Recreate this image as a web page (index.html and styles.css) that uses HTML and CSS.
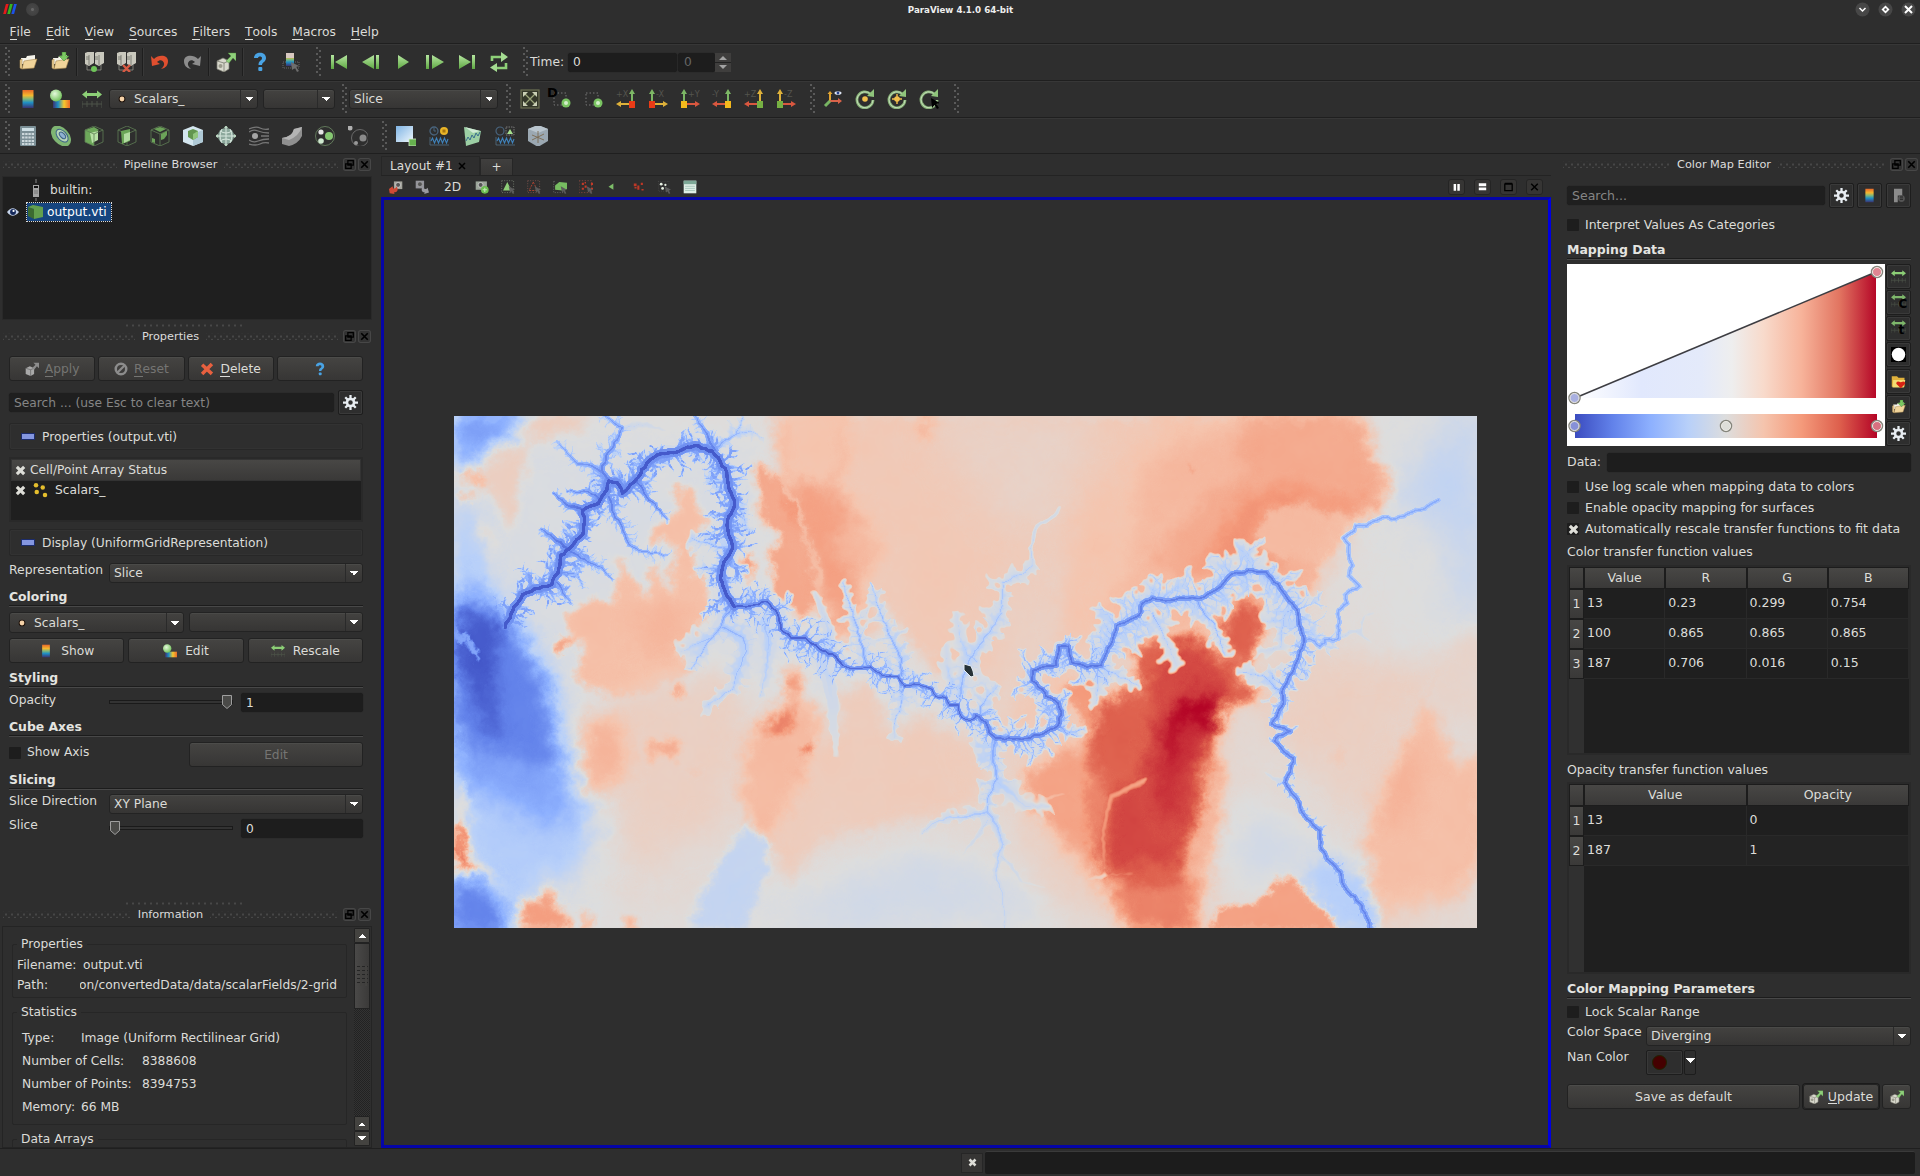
FILE: index.html
```html
<!DOCTYPE html>
<html lang="en">
<head>
<meta charset="utf-8">
<title>ParaView 4.1.0 64-bit</title>
<link rel="stylesheet" href="styles.css">
</head>
<body>
<svg class="defs" xmlns="http://www.w3.org/2000/svg">
<defs>
<linearGradient id="gRain" x1="0" y1="0" x2="0" y2="1"><stop offset="0" stop-color="#e8682a"/><stop offset=".3" stop-color="#f5b82e"/><stop offset=".5" stop-color="#7fb87a"/><stop offset=".7" stop-color="#1f8fc4"/><stop offset="1" stop-color="#3a3372"/></linearGradient>
<linearGradient id="gRainH" x1="1" y1="0" x2="0" y2="0"><stop offset="0" stop-color="#e8682a"/><stop offset=".35" stop-color="#f5c82e"/><stop offset=".7" stop-color="#1f8fc4"/><stop offset="1" stop-color="#3a3372"/></linearGradient>
<linearGradient id="gGreen" x1="0" y1="0" x2="0" y2="1"><stop offset="0" stop-color="#b5e6a0"/><stop offset="1" stop-color="#5fa843"/></linearGradient>
<linearGradient id="gSky" x1="0" y1="0" x2="1" y2="1"><stop offset="0" stop-color="#7fb4e4"/><stop offset="1" stop-color="#eef6fc"/></linearGradient>
<radialGradient id="gBall" cx=".4" cy=".35" r=".7"><stop offset="0" stop-color="#e4f8dc"/><stop offset="1" stop-color="#6cbf54"/></radialGradient>
<symbol id="open" viewBox="0 0 20 20"><path d="M3 6h5l1-2 8-1v9H3z" fill="#f5f3ea"/><path d="M2 8l2-1v10l-2-1zM4 17l2-8 13-2-3 9z" fill="#f0d49a" stroke="#a98950" stroke-width=".6"/></symbol>
<symbol id="opendown" viewBox="0 0 20 20"><use href="#open"/><path d="M12 0h4v4h3l-5 5-5-5h3z" fill="#7cc962" stroke="#3f7a2c" stroke-width=".5"/></symbol>
<symbol id="servers" viewBox="0 0 20 20"><path d="M1 1l5-2 4 1v11l-5 3-4-2zM11 1l4-2 5 1v11l-5 3-4-2z" fill="#c9c8bd"/><path d="M5 3v10M15 3v10M2 5h3M2 7h3M11 5h3M11 7h3" stroke="#6d6d66" stroke-width=".8"/><path d="M3 13v5h14v-5" fill="none" stroke="#92928a" stroke-width=".8"/></symbol>
<symbol id="connect" viewBox="0 0 20 20"><use href="#servers"/><circle cx="10" cy="17" r="3" fill="#6fc55a"/></symbol>
<symbol id="disconnect" viewBox="0 0 20 20"><use href="#servers"/><path d="M7 13l7 7M14 13l-7 7" stroke="#d85b44" stroke-width="2.4"/></symbol>
<symbol id="undo" viewBox="0 0 20 20"><path d="M1 4l1 10 8-2-3-2c3-3 6-2 7 1 .5 2-.5 4-3 6 5-1 7-4 7-8C18 3 9 2 4 7z" fill="#e04f2f"/></symbol>
<symbol id="redo" viewBox="0 0 20 20"><path d="M19 4l-1 10-8-2 3-2c-3-3-6-2-7 1-.5 2 .5 4 3 6-5-1-7-4-7-8C2 3 11 2 16 7z" fill="#8d8d8d"/></symbol>
<symbol id="cubearrow" viewBox="0 0 20 20"><path d="M1 9l6-3 6 3v8l-5 3-7-3z" fill="#d8d8cc" stroke="#7a7a70" stroke-width=".7"/><path d="M1 9l7 2v9M8 11l5-2" fill="none" stroke="#7a7a70" stroke-width=".8"/><circle cx="4.500" cy="14" r="2" fill="#9a9a8c"/><path d="M10 9l5-5-3-3h8v8l-3-3-4 5z" fill="#8fd07b" stroke="#4d8a3b" stroke-width=".4"/></symbol>
<symbol id="cubegrey" viewBox="0 0 20 20"><path d="M1 9l6-3 6 3v8l-5 3-7-3z" fill="#a9a9a9"/><path d="M1 9l7 2v9M8 11l5-2" fill="none" stroke="#666"/><path d="M10 9l5-5-3-3h8v8l-3-3-4 5z" fill="#8d8d8d"/></symbol>
<symbol id="help" viewBox="0 0 20 20"><path d="M4 6c0-7 12-7 12 0 0 4-4 4-4 7H8.500c0-5 3.500-4 3.500-7 0-2-4-2-4 0z" fill="#49a3e4"/><rect x="8.300" y="15" width="4" height="4" rx="1" fill="#49a3e4"/></symbol>
<symbol id="probe" viewBox="0 0 20 20"><path d="M1 10h16v6H1z" fill="none" stroke="#666" stroke-dasharray="1 1"/><rect x="4" y="1" width="8" height="13" fill="url(#gRain)"/><rect x="4" y="1" width="8" height="5" fill="#d8c8c0"/><path d="M9 10l8 4-3 1 3 4-2 1-2-4-3 2z" fill="#6d6d6d"/></symbol>
<symbol id="first" viewBox="0 0 20 20"><path d="M2 3h3v14H2zM18 3v14L6 10z" fill="url(#gGreen)"/></symbol>
<symbol id="last" viewBox="0 0 20 20"><path d="M18 3h-3v14h3zM2 3v14l12-7z" fill="url(#gGreen)"/></symbol>
<symbol id="back" viewBox="0 0 20 20"><path d="M18 3h-3v14h3zM13 3v14L1 10z" fill="url(#gGreen)"/></symbol>
<symbol id="fwd" viewBox="0 0 20 20"><path d="M1 3h3v14H1zM7 3v14l12-7z" fill="url(#gGreen)"/></symbol>
<symbol id="play" viewBox="0 0 20 20"><path d="M5 3v14l11-7z" fill="url(#gGreen)"/></symbol>
<symbol id="loop" viewBox="0 0 20 20"><path d="M3 9V5h10M17 11v5H7" fill="none" stroke="#8ed078" stroke-width="2.600"/><path d="M12 0l7 5-7 5zM8 11v9l-7-4.500z" fill="#a5dc92"/></symbol>
<symbol id="rainbow" viewBox="0 0 20 20"><rect x="4.500" y="1" width="11" height="18" fill="url(#gRain)"/></symbol>
<symbol id="ballmap" viewBox="0 0 20 20"><rect x="3" y="11" width="17" height="8" fill="url(#gRainH)"/><circle cx="6" cy="6.500" r="6" fill="url(#gBall)"/></symbol>
<symbol id="rescale" viewBox="0 0 20 20"><path d="M0 5.500l5-4V4h10V1.500l5 4-5 4V7H5v2.500z" fill="#8ccf76"/><path d="M0 12v7M20 12v7M5 12v6M10 12v6M15 12v6M0 15h20" stroke="#4c5348" stroke-width="1"/></symbol>
<symbol id="calc" viewBox="0 0 20 20"><rect x="2" y="0" width="16" height="20" rx="1" fill="#7b8f96"/><rect x="4" y="2" width="12" height="3" fill="#cfe0e6"/><path d="M4 8h12M4 11.500h12M4 15h12M4 18h12" stroke="#cdd8dc" stroke-width="2" stroke-dasharray="2.400 .8"/></symbol>
<symbol id="contour" viewBox="0 0 20 20"><ellipse cx="10" cy="10" rx="8" ry="12" fill="#7fb573" transform="rotate(-42 10 10)"/><ellipse cx="11" cy="10.500" rx="4.500" ry="7.500" fill="#b8d5b8" stroke="#3c6388" transform="rotate(-42 10 10)"/><ellipse cx="11.500" cy="10.500" rx="2.200" ry="4" fill="#8fb1d0" stroke="#3c6388" transform="rotate(-42 10 10)"/></symbol>
<symbol id="cube" viewBox="0 0 20 20"><path d="M10 0l9 4v12l-9 4-9-4V4zM1 4l9 4 9-4M10 8v12" fill="none" stroke="#5f7d55" stroke-width=".8"/></symbol>
<symbol id="clip" viewBox="0 0 20 20"><path d="M1 4l9-3 5 3-5 3v13l-9-4z" fill="#6da85a"/><path d="M6 7l8-2v9l-6 3z" fill="#b8e2a6"/><use href="#cube"/></symbol>
<symbol id="slice" viewBox="0 0 20 20"><use href="#cube"/><path d="M4 5l9-2v12l-8 3z" fill="#6aa557"/><path d="M7 8l6-2v8l-6 3z" fill="#b1dba0"/></symbol>
<symbol id="thresh" viewBox="0 0 20 20"><use href="#cube"/><path d="M4 3l6-2 6 2-6 3zM11 8l6-3v4l-3 4-3 1zM2 12l3 1v4l-3-1z" fill="#6ca359"/></symbol>
<symbol id="subset" viewBox="0 0 20 20"><path d="M10 0l10 4v12l-10 4-10-4V4z" fill="#d4e6ef"/><path d="M10 8v12l10-4V4z" fill="#afc9d6"/><path d="M10 3l5 2v6l-5 3-5-3V5z" fill="#63964f"/><path d="M10 8v6l5-3V5z" fill="#93c67e"/></symbol>
<symbol id="glyph" viewBox="0 0 20 20"><circle cx="10" cy="10" r="8" fill="#8ca89c"/><path d="M2 10h16M10 2v16M4 5q6 4 12 0M4 15q6-4 12 0M6 3q-4 7 0 14M14 3q4 7 0 14" fill="none" stroke="#d8e8df" stroke-width="1"/><path d="M10-1l2 3H8zM10 21l2-3H8zM-1 10l3-2v4zM21 10l-3-2v4z" fill="#bdd9c4"/></symbol>
<symbol id="stream" viewBox="0 0 20 20"><circle cx="6" cy="10" r="3" fill="#a5a5a5"/><path d="M0 3q7-3 11-1t9 1M0 6q4-3 9-1t11 2M12 10h8M0 14q4 3 9 1t11-2M0 18q7 2 11 0t9-1" fill="none" stroke="#777" stroke-width="1.300"/></symbol>
<symbol id="warp" viewBox="0 0 20 20"><path d="M0 12q10-1 12-9l8-2v9q-4 8-13 10l-7-2z" fill="#8f8f8f"/><path d="M0 12q10-1 12-9l8-2q-3 9-13 13z" fill="#b4b4b4"/></symbol>
<symbol id="group" viewBox="0 0 20 20"><circle cx="10" cy="10" r="9.500" fill="none" stroke="#6f8c66" stroke-width=".8"/><circle cx="6" cy="6" r="2.600" fill="#e4e4e4"/><circle cx="14" cy="10" r="4" fill="#86c872"/><circle cx="6" cy="15" r="2.800" fill="#cfe8cf"/></symbol>
<symbol id="extract" viewBox="0 0 20 20"><circle cx="12" cy="12" r="8.500" fill="none" stroke="#777" stroke-width=".8"/><circle cx="2" cy="2" r="2.500" fill="#b0b0b0"/><circle cx="15" cy="12" r="3.500" fill="#8a8a8a"/><circle cx="8" cy="17" r="2" fill="#999"/></symbol>
<symbol id="selblock" viewBox="0 0 20 20"><rect width="17" height="16" fill="url(#gSky)"/><rect x="13" y="13" width="8" height="7" fill="#66b04e" stroke="#d5ecd0" stroke-width=".8"/></symbol>
<symbol id="plot" viewBox="0 0 20 20"><path d="M1 11v8h19" stroke="#57758d" fill="none" stroke-width=".7"/><path d="M2 15l1.500-3 2 5 2-5 2 5 2-5 2 5 2-5 2 5 1.500-4" fill="none" stroke="#3f83bc" stroke-width="1.100"/></symbol>
<symbol id="clockplot" viewBox="0 0 20 20"><circle cx="5" cy="5" r="4" fill="none" stroke="#49647d" stroke-width="1.300"/><path d="M5 2v3h2" stroke="#49647d" fill="none"/><circle cx="15" cy="5" r="4" fill="#e9b528"/><rect x="13.500" y="3.500" width="3" height="3" fill="#a8760d"/><use href="#plot"/></symbol>
<symbol id="lineplot" viewBox="0 0 20 20"><path d="M2 1l17 4-2 11-13 4z" fill="#9ccfa4"/><path d="M3 1l15 4-7 2z" fill="#d0ebd6"/><path d="M4 15l2-4 2 3 2-5 2 3 2-5 2 3 2-4" fill="none" stroke="#396d8e"/></symbol>
<symbol id="selplot" viewBox="0 0 20 20"><circle cx="5" cy="5" r="4" fill="none" stroke="#49647d" stroke-width="1.200"/><rect x="11" y="1" width="8" height="8" fill="none" stroke="#777" stroke-dasharray="1.500 1"/><path d="M15 3l3 5h-6z" fill="#a5df8e"/><use href="#plot"/></symbol>
<symbol id="macro" viewBox="0 0 20 20"><path d="M10-1l10 4v12l-10 6L0 15V3z" fill="#9ba8b2"/><path d="M10-1L0 3l10 4 10-4z" fill="#b9c5ce"/><path d="M10 5v12M4 9l12 5M16 8L4 14" stroke="#7c6a50" stroke-width=".9"/></symbol>
<symbol id="fit" viewBox="0 0 20 20"><rect x="1" y="1" width="18" height="18" fill="#34382a" stroke="#6d7154" stroke-width="1.200"/><path d="M4 4l12 12M16 4L4 16" stroke="#9aa57a" stroke-width="1.300"/><path d="M3 3h5L3 8zM17 3h-5l5 5zM3 17h5l-5-5zM17 17h-5l5-5z" fill="#c9cfb5"/></symbol>
<symbol id="zoombox" viewBox="0 0 20 20"><rect x="2" y="4" width="12" height="12" fill="none" stroke="#777" stroke-width="1" stroke-dasharray="1.500 2"/><circle cx="14" cy="14" r="4.500" fill="#7ac562"/><circle cx="14" cy="14" r="2" fill="#d2efc9"/></symbol>
<symbol id="orient" viewBox="0 0 20 20"><path d="M6 13V5H4.500L7 2l2.500 3H8v8z" fill="#e2a430"/><path d="M7 11h8V9l4 3-4 3v-2H7z" fill="#d9634a"/><path d="M7 12l-5 5" stroke="#78b563" stroke-width="3"/><ellipse cx="15" cy="4" rx="3.500" ry="1.800" fill="#dfe6f5"/><circle cx="15" cy="4" r="1.400" fill="#25408b"/></symbol>
<symbol id="rot" viewBox="0 0 20 20"><path d="M15.500 5A8 8 0 1 0 18 11" fill="none" stroke="#86b176" stroke-width="2.800"/><path d="M15.500 5A8 8 0 1 0 18 11" fill="none" stroke="#c5dfba" stroke-width="1"/><path d="M12 7l7 1V0z" fill="#8fc47b"/></symbol>
<symbol id="rotdot" viewBox="0 0 20 20"><use href="#rot"/><circle cx="10" cy="10" r="2.800" fill="#f2c04c"/></symbol>
<symbol id="rotcross" viewBox="0 0 20 20"><use href="#rotdot"/><path d="M10 5v10M5 10h10" stroke="#f2c04c" stroke-width="1.400"/></symbol>
<symbol id="rotpick" viewBox="0 0 20 20"><use href="#rot"/><path d="M12 9l9 5-3.500 1 2.500 4-2 1-2.500-4-2.500 3z" fill="#000"/></symbol>
<symbol id="gear" viewBox="0 0 20 20"><g fill="none" stroke="#e8edf2"><circle cx="10" cy="10" r="4.700" stroke-width="3.400"/><path d="M10 0v5M10 15v5M0 10h5M15 10h5M3 3l3.500 3.500M13.500 13.500L17 17M17 3l-3.500 3.500M6.500 13.500L3 17" stroke-width="3"/></g></symbol>
<symbol id="floaticon" viewBox="0 0 12 12"><rect x=".5" y=".5" width="11" height="11" rx="2" fill="#333" stroke="#474747"/><path d="M4.500 2.500h5v4h-5zM2.500 5.500h5v4h-5z" fill="#333" stroke="#000" stroke-width="1.200"/></symbol>
<symbol id="closeicon" viewBox="0 0 12 12"><rect x=".5" y=".5" width="11" height="11" rx="2" fill="#333" stroke="#474747"/><path d="M3 3l6 6M9 3L3 9" stroke="#000" stroke-width="1.500"/></symbol>
<symbol id="reset" viewBox="0 0 20 20"><circle cx="10" cy="10" r="7.500" fill="none" stroke="#8c8c8c" stroke-width="3.600"/><path d="M5 15L15 5" stroke="#8c8c8c" stroke-width="3.200"/></symbol>
<symbol id="delete" viewBox="0 0 20 20"><path d="M3 4l14 13M17 3L3 17" stroke="#e8603f" stroke-width="5"/></symbol>
<symbol id="check" viewBox="0 0 12 12"><path d="M2 2l8 8M10 2l-8 8" stroke="#deded8" stroke-width="3.400"/></symbol>
<symbol id="point" viewBox="0 0 20 20"><circle cx="10" cy="10" r="4.200" fill="#1d1008"/><circle cx="10" cy="10" r="3" fill="#f6d3a9"/></symbol>
<symbol id="points" viewBox="0 0 20 20"><g fill="#e5be2d"><circle cx="4" cy="3" r="3"/><circle cx="13" cy="6" r="3"/><circle cx="5" cy="12" r="3"/><circle cx="16" cy="16" r="3"/></g></symbol>
<symbol id="camundo" viewBox="0 0 20 20"><path d="M7 2h12v11H7z" fill="#a4a49c"/><circle cx="13" cy="7" r="3.500" fill="#555" stroke="#ddd"/><path d="M0 13l5-4 1 3q4 1 5-3 4 8-4 9l1 2-7-1z" fill="#cf4a36"/></symbol>
<symbol id="camredo" viewBox="0 0 20 20"><path d="M1 1h12v11H1z" fill="#93939a"/><circle cx="7" cy="6" r="3.500" fill="#555" stroke="#aaa"/><path d="M20 18l-2-7-2 2q-4 0-5-4-4 8 3 9l-1 2z" fill="#9a9aa0"/></symbol>
<symbol id="camzoom" viewBox="0 0 20 20"><path d="M1 2h16v12H1z" fill="#9ca69a"/><circle cx="8" cy="7" r="3.500" fill="#555" stroke="#ddd"/><circle cx="14" cy="14" r="5.500" fill="#6dbf51"/><path d="M14 11v6M11 14h6" stroke="#c4eab8" stroke-width="1.500"/></symbol>
<symbol id="selarrow" viewBox="0 0 20 20"><path d="M11 9l9 5-3 1 2 4-2 1-2-4-2 2z" fill="#5b5b5b"/></symbol>
<symbol id="selcell" viewBox="0 0 20 20"><rect x="1" y="1" width="17" height="17" fill="none" stroke="#7f8a7a" stroke-dasharray="1.500 2"/><path d="M9 3l6 12H3z" fill="#8fd078"/><use href="#selarrow"/></symbol>
<symbol id="selpoint" viewBox="0 0 20 20"><rect x="1" y="1" width="17" height="17" fill="none" stroke="#8a5a50" stroke-dasharray="1.500 2"/><path d="M9 3l6 12H3z" fill="none" stroke="#b34331" stroke-width="1.300" stroke-dasharray="3 1.500"/><use href="#selarrow"/></symbol>
<symbol id="frust" viewBox="0 0 20 20"><path d="M1 2h3M1 2v16h14" fill="none" stroke="#777" stroke-dasharray="1.500 2"/><path d="M3 8l6-5 11 1v9l-6 2-11-1z" fill="#77bd61"/><use href="#selarrow"/></symbol>
<symbol id="frustp" viewBox="0 0 20 20"><path d="M0 1h18v17H0z" fill="none" stroke="#8f4a40" stroke-dasharray="2 2"/><g fill="#c33a28"><path d="M4 4h3v3H4zM8 8h3v3H8zM4 11h3v3H4zM17 4h3v3h-3zM17 11h3v3h-3zM8 3h2v2H8z"/></g><use href="#selarrow"/></symbol>
<symbol id="poly" viewBox="0 0 20 20"><path d="M12 5v9l-7-4.500z" fill="#7dbd69"/></symbol>
<symbol id="blocks" viewBox="0 0 20 20"><path d="M4 5h4v4H4zM9 8h3v6H9zM5 10h3v2H5zM14 4h3v3h-3zM15 13h3v2h-3z" fill="#bd3827"/></symbol>
<symbol id="interact" viewBox="0 0 20 20"><rect x="2" y="2" width="15" height="14" fill="none" stroke="#555" stroke-dasharray="1 2"/><g fill="#e6efe2"><circle cx="6" cy="6" r="2"/><circle cx="12" cy="7" r="1.600"/><circle cx="8" cy="12" r="2"/></g><use href="#selarrow"/></symbol>
<symbol id="sheet" viewBox="0 0 20 20"><rect x="1" y="1" width="18" height="18" fill="#dfeee6"/><rect x="1" y="1" width="18" height="5" fill="#7da897"/><path d="M3 9h14M3 12h14M3 15h14" stroke="#98bbb0"/></symbol>
</defs>
</svg>

<header class="titlebar">
  <svg class="logo" viewBox="0 0 15 11"><path d="M3 0h3L3 11H0z" fill="#e51a1a"/><path d="M7.500 0h3l-3 11h-3z" fill="#35b521"/><path d="M12 0h3l-3 11H9z" fill="#1d52e8"/></svg>
  <span class="orb"></span>
  <span class="wtitle">ParaView 4.1.0 64-bit</span>
  <span class="wbtns">
    <svg viewBox="0 0 15 15"><circle cx="7.500" cy="7.500" r="7" fill="#474747"/><path d="M4.500 6l3 3 3-3" fill="none" stroke="#fff" stroke-width="1.500"/></svg>
    <svg viewBox="0 0 15 15"><circle cx="7.500" cy="7.500" r="7" fill="#474747"/><path d="M7.500 3.500l4 4-4 4-4-4z" fill="#fff"/><circle cx="7.500" cy="7.500" r="1.200" fill="#444"/></svg>
    <svg viewBox="0 0 15 15"><circle cx="7.500" cy="7.500" r="7" fill="#474747"/><path d="M4 4l7 7M11 4l-7 7" stroke="#fff" stroke-width="2"/></svg>
  </span>
</header>
<nav class="menu"><span><u>F</u>ile</span><span><u>E</u>dit</span><span><u>V</u>iew</span><span><u>S</u>ources</span><span><u>F</u>ilters</span><span><u>T</u>ools</span><span><u>M</u>acros</span><span><u>H</u>elp</span></nav>

<div class="toolbar">
  <i class="grip"></i>
  <svg class="t"><use href="#open"/></svg><svg class="t"><use href="#opendown"/></svg><i class="sep"></i>
  <svg class="t"><use href="#connect"/></svg><svg class="t"><use href="#disconnect"/></svg><i class="sep"></i>
  <svg class="t"><use href="#undo"/></svg><svg class="t"><use href="#redo"/></svg><i class="sep"></i>
  <svg class="t"><use href="#cubearrow"/></svg><i class="sep"></i>
  <svg class="t"><use href="#help"/></svg><svg class="t"><use href="#probe"/></svg>
  <i class="grip wide g1"></i>
  <svg class="t"><use href="#first"/></svg><svg class="t"><use href="#back"/></svg><svg class="t"><use href="#play"/></svg><svg class="t"><use href="#fwd"/></svg><svg class="t"><use href="#last"/></svg><svg class="t"><use href="#loop"/></svg>
  <i class="grip wide"></i>
  <span class="time">Time:</span><span class="field f-time">0</span><span class="field f-idx">0</span><span class="spin"><svg viewBox="0 0 16 19"><path d="M8 3l4 4H4zM8 16l4-4H4z" fill="#a3a3a3"/><path d="M0 9.500h16" stroke="#222"/></svg></span>
</div>
<div class="toolbar">
  <i class="grip"></i>
  <svg class="t"><use href="#rainbow"/></svg><svg class="t"><use href="#ballmap"/></svg><svg class="t"><use href="#rescale"/></svg>
  <span class="combo c-arr"><svg class="i16"><use href="#point"/></svg><em>Scalars_</em></span><span class="combo c-comp"></span>
  <i class="grip g2"></i><span class="combo c-rep"><em>Slice</em></span><i class="grip g3"></i>
  <svg class="t"><use href="#fit"/></svg>
  <span class="t dd"><svg><use href="#zoombox"/></svg><b>D</b></span>
  <svg class="t"><use href="#zoombox"/></svg>
  <svg class="t" viewBox="0 0 20 20"><text x="0" y="8" class="ax">+X</text><path d="M15 13V5h-2l3-5 3 5h-2v8z" fill="#7cb765"/><path d="M13 14H5v-2l-5 3 5 3v-2h8z" fill="#deb13a"/><rect x="13" y="12" width="6" height="7" fill="#ea3b16"/></svg>
  <svg class="t" viewBox="0 0 20 20"><text x="8" y="8" class="ax">-X</text><path d="M3 13V5H1l3-5 3 5H5v8z" fill="#7cb765"/><path d="M7 14h8v-2l5 3-5 3v-2H7z" fill="#deb13a"/><rect x="1" y="12" width="6" height="7" fill="#ea3b16"/></svg>
  <svg class="t" viewBox="0 0 20 20"><text x="8" y="8" class="ax">+Y</text><path d="M3 13V5H1l3-5 3 5H5v8z" fill="#7cb765"/><path d="M7 14h8v-2l5 3-5 3v-2H7z" fill="#d9573f"/><rect x="1" y="12" width="6" height="7" fill="#f3b81c"/></svg>
  <svg class="t" viewBox="0 0 20 20"><text x="0" y="8" class="ax">-Y</text><path d="M15 13V5h-2l3-5 3 5h-2v8z" fill="#7cb765"/><path d="M13 14H5v-2l-5 3 5 3v-2h8z" fill="#d9573f"/><rect x="13" y="12" width="6" height="7" fill="#f3b81c"/></svg>
  <svg class="t" viewBox="0 0 20 20"><text x="0" y="8" class="ax">+Z</text><path d="M15 13V5h-2l3-5 3 5h-2v8z" fill="#deb13a"/><path d="M13 14H5v-2l-5 3 5 3v-2h8z" fill="#d9573f"/><rect x="13" y="12" width="6" height="7" fill="#76b043"/></svg>
  <svg class="t" viewBox="0 0 20 20"><text x="8" y="8" class="ax">-Z</text><path d="M3 13V5H1l3-5 3 5H5v8z" fill="#deb13a"/><path d="M7 14h8v-2l5 3-5 3v-2H7z" fill="#d9573f"/><rect x="1" y="12" width="6" height="7" fill="#76b043"/></svg>
  <i class="grip wide g4"></i>
  <svg class="t"><use href="#orient"/></svg><svg class="t"><use href="#rotdot"/></svg><svg class="t"><use href="#rotcross"/></svg><svg class="t"><use href="#rotpick"/></svg>
  <i class="grip wide g5"></i>
</div>
<div class="toolbar filters">
  <i class="grip"></i>
  <svg class="t"><use href="#calc"/></svg><svg class="t"><use href="#contour"/></svg><svg class="t"><use href="#clip"/></svg><svg class="t"><use href="#slice"/></svg><svg class="t"><use href="#thresh"/></svg><svg class="t"><use href="#subset"/></svg><svg class="t"><use href="#glyph"/></svg><svg class="t"><use href="#stream"/></svg><svg class="t"><use href="#warp"/></svg><svg class="t"><use href="#group"/></svg><svg class="t"><use href="#extract"/></svg>
  <i class="grip wide"></i>
  <svg class="t"><use href="#selblock"/></svg><svg class="t"><use href="#clockplot"/></svg><svg class="t"><use href="#lineplot"/></svg><svg class="t"><use href="#selplot"/></svg><svg class="t"><use href="#macro"/></svg>
</div>

<div class="main">
<aside class="left">
  <div class="dock-title"><i></i><span>Pipeline Browser</span><i></i><svg><use href="#floaticon"/></svg><svg><use href="#closeicon"/></svg></div>
  <div class="tree">
    <div class="tnode"><span class="eye"></span><svg class="srv" viewBox="0 0 8 22"><path d="M4 0v4M4 19v3" stroke="#888"/><rect x="1" y="6" width="6" height="12" fill="#a5a5a5"/><rect x="2" y="7" width="4" height="2" fill="#111"/><path d="M2 12h4M2 14h4" stroke="#777"/></svg><span>builtin:</span></div>
    <div class="tnode"><span class="eye"><svg viewBox="0 0 11 8"><path d="M0 4q5-7 11 0-6 7-11 0z" fill="#c5d3ea"/><circle cx="5.500" cy="4" r="2.700" fill="#14285a"/><circle cx="6" cy="3" r="1" fill="#fff"/></svg></span><span class="sel"><svg viewBox="0 0 15 14"><path d="M0 2l6 2v10l-6-3z" fill="#3c6b31"/><path d="M0 2l5-2 10 2v10L6 14V4z" fill="#63a04e"/></svg>output.vti</span></div>
  </div>
  <div class="split"></div>
  <div class="dock-title"><i></i><span>Properties</span><i></i><svg><use href="#floaticon"/></svg><svg><use href="#closeicon"/></svg></div>
  <div class="props">
    <div class="r r-btns"><span class="btn off"><svg class="i14"><use href="#cubegrey"/></svg><em><u>A</u>pply</em></span><span class="btn off"><svg class="i14"><use href="#reset"/></svg><em><u>R</u>eset</em></span><span class="btn"><svg class="i14"><use href="#delete"/></svg><em><u>D</u>elete</em></span><span class="btn"><svg class="i14"><use href="#help"/></svg></span></div>
    <div class="r r-search"><span class="field ph">Search ... (use Esc to clear text)</span><span class="gearbtn"><svg><use href="#gear"/></svg></span></div>
    <div class="group g-a"><i class="minus"></i>Properties (output.vti)</div>
    <div class="arrays"><div class="ahead"><svg class="ck"><use href="#check"/></svg>Cell/Point Array Status</div><div class="arow"><svg class="ck"><use href="#check"/></svg><svg class="pts"><use href="#points"/></svg>Scalars_</div></div>
    <div class="group g-b"><i class="minus"></i>Display (UniformGridRepresentation)</div>
    <div class="r r-rep"><label>Representation</label><span class="combo"><em>Slice</em></span></div>
    <h4 class="h-col">Coloring</h4>
    <div class="r r-col"><span class="combo"><svg class="i16"><use href="#point"/></svg><em>Scalars_</em></span><span class="combo"></span></div>
    <div class="r r-show"><span class="btn"><svg class="i14"><use href="#rainbow"/></svg><em>Show</em></span><span class="btn"><svg class="i14"><use href="#ballmap"/></svg><em>Edit</em></span><span class="btn"><svg class="i14"><use href="#rescale"/></svg><em>Rescale</em></span></div>
    <h4 class="h-sty">Styling</h4>
    <div class="r r-op"><label>Opacity</label><span class="slider end"><svg viewBox="0 0 10 14"><path d="M.5.5h9v9L5 13.500.5 9.500z" fill="#4a4a48" stroke="#aaa" stroke-width=".9"/></svg></span><span class="field">1</span></div>
    <h4 class="h-cube">Cube Axes</h4>
    <div class="r r-cube"><span class="box"></span><label>Show Axis</label><span class="btn off">Edit</span></div>
    <h4 class="h-sli">Slicing</h4>
    <div class="r r-dir"><label>Slice Direction</label><span class="combo"><em>XY Plane</em></span></div>
    <div class="r r-sl"><label>Slice</label><span class="slider"><svg viewBox="0 0 10 14"><path d="M.5.5h9v9L5 13.500.5 9.500z" fill="#4a4a48" stroke="#aaa" stroke-width=".9"/></svg></span><span class="field">0</span></div>
  </div>
  <div class="split"></div>
  <div class="dock-title"><i></i><span>Information</span><i></i><svg><use href="#floaticon"/></svg><svg><use href="#closeicon"/></svg></div>
  <div class="info">
    <div class="icol">
      <fieldset class="fs1"><legend>Properties</legend><p><b>Filename:</b>output.vti</p><p><b>Path:</b><span class="path"><bdi>selection/convertedData/data/scalarFields/2-grid</bdi></span></p></fieldset>
      <fieldset class="fs2"><legend>Statistics</legend><p><b>Type:</b>Image (Uniform Rectilinear Grid)</p><p><b class="w">Number of Cells:</b>8388608</p><p><b class="w">Number of Points:</b>8394753</p><p><b>Memory:</b>66 MB</p></fieldset>
      <fieldset class="fs3"><legend>Data Arrays</legend></fieldset>
    </div>
    <div class="scroll"><span class="sb up"></span><span class="thumb"></span><span class="track"></span><span class="sb up"></span><span class="sb down"></span></div>
  </div>
</aside>

<section class="center">
  <div class="tabs"><span class="tab">Layout #1<svg viewBox="0 0 8 8"><path d="M1 1l6 6M7 1L1 7" stroke="#000" stroke-width="1.500"/></svg></span><span class="tab plus">+</span></div>
  <div class="viewbar">
    <svg><use href="#camundo"/></svg><svg><use href="#camredo"/></svg><span>2D</span><svg><use href="#camzoom"/></svg><svg><use href="#selcell"/></svg><svg><use href="#selpoint"/></svg><svg><use href="#frust"/></svg><svg><use href="#frustp"/></svg><svg><use href="#poly"/></svg><svg><use href="#blocks"/></svg><svg><use href="#interact"/></svg><svg><use href="#sheet"/></svg>
    <span class="vbtns">
      <svg viewBox="0 0 17 17"><path d="M5 5h3v8H5zM9.500 5h3v8h-3z" fill="#fff"/></svg><svg viewBox="0 0 17 17"><path d="M4 4h9v3.500H4zM4 9h9v3.500H4z" fill="#fff"/></svg><svg viewBox="0 0 17 17"><path d="M4 5h9v8H4zM4 4h9" fill="none" stroke="#000" stroke-width="1.600"/></svg><svg viewBox="0 0 17 17"><path d="M4.500 4.500l8 8M12.500 4.500l-8 8" stroke="#000" stroke-width="1.800"/></svg>
    </span>
  </div>
  <div class="view"><div class="mapwrap"><canvas id="map" width="1023" height="512"></canvas><svg class="cursor" viewBox="0 0 12 15"><path d="M1 1l7 2 2 5 1 5-3 1L5 11 1 7z" fill="#263238" stroke="#e8eef4" stroke-width="1"/></svg></div></div>
</section>

<aside class="right">
  <div class="dock-title"><i></i><span>Color Map Editor</span><i></i><svg><use href="#floaticon"/></svg><svg><use href="#closeicon"/></svg></div>
  <div class="cme">
    <div class="r c-search"><span class="field ph">Search...</span><span class="gearbtn"><svg><use href="#gear"/></svg></span><span class="gearbtn"><svg><use href="#rainbow"/></svg></span><span class="gearbtn"><svg viewBox="0 0 20 20"><path d="M4 1h11v9H9v9H4z" fill="#8b8b8b"/><circle cx="14" cy="14" r="4.500" fill="#555"/><path d="M12 12h4M12 15h4" stroke="#222" stroke-width="1.500"/></svg></span></div>
    <div class="r chk k1"><span class="box"></span>Interpret Values As Categories</div>
    <h4 class="h-map">Mapping Data</h4>
    <div class="mapping">
      <svg class="chart" viewBox="0 0 318 182">
        <defs><linearGradient id="cw" gradientUnits="userSpaceOnUse" x1="8" y1="0" x2="310" y2="0"><stop offset="0" stop-color="#3b4cc0"/><stop offset=".125" stop-color="#6282ea"/><stop offset=".25" stop-color="#8db0fe"/><stop offset=".375" stop-color="#b8d0f9"/><stop offset=".5" stop-color="#ddd"/><stop offset=".625" stop-color="#f5c4ad"/><stop offset=".75" stop-color="#f49a7b"/><stop offset=".875" stop-color="#de604d"/><stop offset="1" stop-color="#b40426"/></linearGradient>
        <linearGradient id="cwo" gradientUnits="userSpaceOnUse" x1="8" y1="0" x2="310" y2="0"><stop offset="0" stop-color="#fff"/><stop offset=".22" stop-color="#e1e8fd"/><stop offset=".42" stop-color="#e4eafa"/><stop offset=".52" stop-color="#eee"/><stop offset=".625" stop-color="#f8dacb"/><stop offset=".75" stop-color="#f7b39a"/><stop offset=".875" stop-color="#e27561"/><stop offset="1" stop-color="#b40426"/></linearGradient></defs>
        <rect width="318" height="182" fill="#fff"/><path d="M8 134L309 8v126z" fill="url(#cwo)"/><path d="M8 134L309 8" stroke="#3d3d42" stroke-width="1.500"/><rect x="8" y="150" width="302" height="24" fill="url(#cw)"/>
        <g stroke="#85857c" stroke-width="1.500"><circle cx="7.500" cy="134" r="5.500" fill="#a9b0e0"/><circle cx="310" cy="8" r="5.500" fill="#e08592"/><circle cx="7.500" cy="162" r="5.500" fill="#8791d8"/><circle cx="159" cy="162" r="5.500" fill="#deded9"/><circle cx="310" cy="162" r="5.500" fill="#d8707f"/></g>
        <g fill="none" stroke="#eceae4" stroke-width="1"><circle cx="7.500" cy="134" r="4.500"/><circle cx="310" cy="8" r="4.500"/><circle cx="7.500" cy="162" r="4.500"/><circle cx="159" cy="162" r="4.500"/><circle cx="310" cy="162" r="4.500"/></g>
      </svg>
      <div class="side"><span class="gearbtn"><svg><use href="#rescale"/></svg></span><span class="gearbtn rc"><svg><use href="#rescale"/></svg><b>C</b></span><span class="gearbtn rc"><svg><use href="#rescale"/></svg><b>t</b></span><span class="gearbtn"><svg viewBox="0 0 20 20"><rect width="20" height="20" fill="#000"/><circle cx="10" cy="10" r="9" fill="#fff"/></svg></span><span class="gearbtn"><svg viewBox="0 0 20 20"><path d="M1 3h7l2 2h8v12H1z" fill="#e0b13c"/><path d="M3 8h16l-2 10H2z" fill="#f4dd72"/><path d="M13 19l-6-6q0-5 6-2 6-3 6 2z" fill="#d62314"/></svg></span><span class="gearbtn"><svg><use href="#opendown"/></svg></span><span class="gearbtn"><svg><use href="#gear"/></svg></span></div>
    </div>
    <div class="r c-data"><label>Data:</label><span class="field"></span></div>
    <div class="r chk k2"><span class="box"></span>Use log scale when mapping data to colors</div>
    <div class="r chk k3"><span class="box"></span>Enable opacity mapping for surfaces</div>
    <div class="r chk k3"><span class="box"><svg class="ck"><use href="#check"/></svg></span>Automatically rescale transfer functions to fit data</div>
    <div class="cap">Color transfer function values</div>
    <div class="table t4">
      <div class="tr th"><span></span><span>Value</span><span>R</span><span>G</span><span>B</span></div>
      <div class="tr"><span>1</span><span>13</span><span>0.23</span><span>0.299</span><span>0.754</span></div>
      <div class="tr alt"><span>2</span><span>100</span><span>0.865</span><span>0.865</span><span>0.865</span></div>
      <div class="tr"><span>3</span><span>187</span><span>0.706</span><span>0.016</span><span>0.15</span></div>
    </div>
    <div class="cap cap2">Opacity transfer function values</div>
    <div class="table t2">
      <div class="tr th"><span></span><span>Value</span><span>Opacity</span></div>
      <div class="tr"><span>1</span><span>13</span><span>0</span></div>
      <div class="tr alt"><span>2</span><span>187</span><span>1</span></div>
    </div>
    <h4 class="h-par">Color Mapping Parameters</h4>
    <div class="r chk k4"><span class="box"></span>Lock Scalar Range</div>
    <div class="r c-space"><label>Color Space</label><span class="combo"><em>Diverging</em></span></div>
    <div class="r c-nan"><label>Nan Color</label><span class="nan"><i></i></span><span class="nandrop"></span></div>
    <div class="r c-foot"><span class="btn">Save as default</span><span class="btn upd"><svg class="i14"><use href="#cubearrow"/></svg><em><u>U</u>pdate</em></span><span class="btn"><svg class="i14"><use href="#cubearrow"/></svg></span></div>
  </div>
</aside>
</div>
<footer class="status"><span class="sx"><svg><use href="#check"/></svg></span><span class="sf"></span></footer>
<script src="map.js"></script>
</body>
</html>
```
FILE: styles.css
```css
*{box-sizing:border-box}
body{margin:0;width:1920px;height:1176px;overflow:hidden;background:#2e2e2e;color:#dcdcd8;font:12.25px/16px "DejaVu Sans",sans-serif;display:flex;flex-direction:column;cursor:default}
em,i{font-style:normal}
u{text-decoration:none;border-bottom:1px solid currentColor;line-height:13px;display:inline-block}
.defs{position:absolute;width:0;height:0}
svg{overflow:visible;flex:none}
label{flex:none}
.titlebar{height:20px;display:flex;align-items:center;padding:0 4px 2px 3px}
.logo{width:14px;height:10px}
.orb{width:13px;height:13px;border-radius:50%;background:radial-gradient(#666 0 1px,#474747 2px,#3c3c3c);margin-left:9px}
.wtitle{flex:1;text-align:center;font-weight:bold;font-size:8.7px;padding:1px 0 0 27px;color:#eee}
.wbtns{display:flex;gap:8px}
.wbtns svg{width:15px;height:15px}
.menu{height:23px;display:flex;align-items:center;gap:15px;padding-left:9.500px}
.toolbar{height:37px;display:flex;align-items:center;border-top:1px solid #1f1f1f;box-shadow:inset 0 1px #373737}
.t{width:20px;height:20px;margin:0 6px}
.filters .t{margin:0 6.47px}
.filters{height:36px}
.grip{width:12px;height:30px;background:radial-gradient(circle at 1px 1px,#5a5a5a 0 .9px,transparent 1.200px) 5px 0/4px 6px no-repeat,radial-gradient(circle at 1px 1px,#5a5a5a 0 .9px,transparent 1.200px) 8px 3px/4px 6px no-repeat;background-repeat:repeat-y;flex:none}
.grip.wide{width:16px;background-position-x:8px,11px}
.grip.g1{width:15px}
.grip.g2{width:14px;background-position-x:7px,10px}.grip.g3{width:16px;background-position-x:8px,11px}
.grip.g4{width:15px}.grip.g5{margin-left:1px}
.filters .grip.wide{width:15px}
.sep{width:2px;height:28px;background:#1e1e1e;border-right:1px solid #383838}
.time{width:38px;white-space:nowrap;margin-left:-1px}
.field{background:#1d1d1d;border-radius:3px;height:19px;padding:0 5px;display:flex;align-items:center;white-space:nowrap;box-shadow:0 0 1px #151515}
.f-time{width:109px}.f-idx{width:37px;color:#666;margin-left:1px;padding-left:6px}
.spin{width:16px;height:19px;background:#3f3e3d}
.spin svg{width:16px;height:19px;display:block}
.combo{display:flex;align-items:center;height:20px;background:linear-gradient(#434240,#363534);border:1px solid #232323;border-radius:3px;padding-left:4px;box-shadow:inset 0 1px #4a4a48}
.combo::after{content:"";margin-left:auto;width:16px;height:100%;flex:none;border-left:1px solid #2a2a2a;background:conic-gradient(from -45deg at 50% 100%,#fff 90deg,transparent 0) 50% 50%/8px 4px no-repeat}
.i16{width:16px;height:16px;margin-right:4px}
.c-arr{width:149px;margin-left:1px}.c-comp{width:72px;margin-left:5px}.c-rep{width:149px}
.dd{position:relative}.dd svg{width:20px;height:20px}
.dd b{position:absolute;left:-5px;top:-4px;color:#000;font-size:13px}
.ax{font:8px "DejaVu Sans",sans-serif;fill:#55554f}
.main{flex:1;display:flex;min-height:0;border-top:1px solid #1f1f1f}
.left{width:380px;padding:0 8px 0 2px;display:flex;flex-direction:column}
.dock-title{height:22px;display:flex;align-items:center;font-size:11.3px;color:#dcdcdc;padding:0 1px 1px 0;flex:none}
.dock-title i{flex:1;height:7px;margin:0 7px 0 1px;background:radial-gradient(circle,#474747 0 .9px,transparent 1.300px) 0 0/6px 7px,radial-gradient(circle,#474747 0 .7px,transparent 1.200px) 3px 3px/6px 7px}
.dock-title span+i{margin:0 3px 0 7px}
.dock-title svg{width:13px;height:13px;margin-left:2px}
.tree{height:144px;flex:none;background:#1f1f1f;border:1px solid #292929}
.tnode{height:22px;display:flex;align-items:center;margin-top:2px}
.tnode+.tnode{margin-top:0}
.eye{width:24px;height:10px;padding-left:4px;display:flex}.eye svg{width:12px}
.srv{width:8px;height:22px;margin:0 10px 0 5px}
.sel{height:18px;background:#16457f;outline:1px dotted #ddd;color:#fff;display:flex;align-items:center;gap:4px;padding:0 4px 0 1px}
.sel svg{width:15px;height:14px}
.split{height:7px;width:118px;margin:2px 0 -3px 122px;background:radial-gradient(circle,#484848 0 .9px,transparent 1.300px) 0 0/6px 7px;flex:none}
.props{height:550px;padding-left:7px;width:361px;display:flex;flex-direction:column;flex:none}
.r{display:flex;flex:none}
.btn{height:25px;border:1px solid #222;border-radius:3px;background:linear-gradient(#454442,#373635);box-shadow:inset 0 1px #4c4c4a;display:flex;align-items:center;justify-content:center;gap:6px;flex:1}
.off{color:#757573}
.i14{width:14px;height:14px}
.r-btns{gap:3px;margin-top:8px}
.r-search{margin-top:9px;align-items:center;height:25px}
.r-search .field{flex:1;margin-right:4px}
.ph{color:#858585;background:#1f1f1f}
.gearbtn{width:25px;height:25px;border:1px solid #1d1d1d;border-radius:2px;box-shadow:inset 0 0 0 1px #3a3a3a;display:grid;place-items:center;flex:none}
.gearbtn svg{width:15px;height:15px}
.group{height:27px;border:1px solid #272727;box-shadow:inset 0 0 0 1px #323232;border-radius:2px;display:flex;align-items:center;padding-left:12px;flex:none}
.g-a{margin-top:8px}.g-b{margin-top:7px}
.minus{width:12px;height:5px;background:#8496e0;outline:1px solid #1c2c6c;margin-right:8px}
.arrays{height:65px;background:#1f1f1f;border:2px solid #292929;margin-top:7px;flex:none}
.ahead{height:22px;background:linear-gradient(#484745,#3a3938);border:1px solid #333;display:flex;align-items:center;gap:4px;padding-left:3px}
.arow{height:18px;display:flex;align-items:center;padding-left:4px}
.ck{width:11px;height:11px}
.arow .pts{width:15px;height:15px;margin:0 7px 0 7px}
.r-rep{margin-top:6px;height:21px}.r-rep label,.r-dir label,.r-sl label,.r-op label{width:100px;white-space:nowrap}
.r-rep label{font-size:12.4px}
.r-rep .combo,.r-dir .combo{flex:1;margin-top:1px}
h4{margin:0;font-size:12.4px;line-height:16px;border-bottom:1px solid #1c1c1c;box-shadow:0 1px #484848;height:17px;flex:none;color:#e4e4e0}
.h-col{margin-top:6px}
.r-col{margin-top:6px;gap:5px}.r-col .combo{flex:1;height:21px}.r-col .combo+.combo{height:20px}
.r-show{margin-top:5px;gap:4px}.r-show .btn{gap:8px}
.h-sty{margin-top:7px}
.r-op{margin-top:5px;height:20px}
.r-sl label{margin-top:-1px}
.slider{width:124px;height:4px;margin-top:8px;border:1px solid #1a1a1a;background:#333;display:flex;align-items:center}
.slider.end{justify-content:flex-end}
.slider svg{width:10px;height:14px}
.r-op .field,.r-sl .field{flex:1;margin:1px 0 0 8px}
.h-cube{margin-top:7px}
.r-cube{margin-top:6px;height:25px}
.box{width:12px;height:12px;background:#1d1d1d;margin-right:6px;display:grid;place-items:center;flex:none;border-radius:1px}
.r-cube .box{margin-top:5px}.r-cube label{width:162px;margin-top:2px}
.h-sli{margin-top:5px}
.r-dir{margin-top:4px;height:22px}
.r-sl{margin-top:3px;height:22px}
.info{height:222px;border:1px solid #242424;display:flex;overflow:hidden;flex:none}
.icol{flex:1;padding:9px 9px 0;overflow:hidden}
fieldset{margin:0;border:1px solid #262626;border-radius:2px;padding:0 0 0 4px;min-width:0;width:335px}
legend{padding:0 4px}
p{margin:0;display:flex;white-space:nowrap}
p b{font-weight:normal;width:66px;flex:none}
.fs1{height:62px}.fs1 p{height:20px;line-height:20px}.fs1 p:first-of-type{margin-top:3px}
.path{width:257px;overflow:hidden;direction:rtl;margin-left:-3px}
.fs2{height:121px;margin-top:6px;padding-left:9px}.fs2 legend{margin-left:-5px}.fs2 p{height:23px;line-height:23px}.fs2 p:first-of-type{margin-top:7px}
.fs2 b{width:59px}.fs2 b.w{width:120px}
.fs3{height:40px;margin-top:6px}
.scroll{width:16px;display:flex;flex-direction:column;padding:1px 0 1px;margin-right:1px}
.sb{height:15px;border:1px solid #222;background:#444340 conic-gradient(from 135deg at 50% 0,#fff 90deg,transparent 0) 50% 50%/8px 4px no-repeat;border-radius:1px}
.sb.down{transform:scaleY(-1)}
.thumb{height:66px;border:1px solid #222;background:repeating-linear-gradient(90deg,transparent 0 3px,#42413f 3px 5px) 2px 22px/11px 20px no-repeat,repeating-linear-gradient(#252525 0 1px,transparent 1px 4px) 2px 22px/11px 20px no-repeat,linear-gradient(90deg,#4a4948,#3b3a39)}
.track{flex:1;background:repeating-conic-gradient(#222 0 25%,#333 0 50%) 0 0/2px 2px}
.center{width:1171px;display:flex;flex-direction:column;padding:3px 0 0 1px}
.tabs{height:19px;display:flex;align-items:flex-end;border-bottom:1px solid #232323}
.tab{width:99px;height:19px;display:flex;align-items:center;padding-left:8px;gap:5px;border:1px solid #262626;border-bottom:0;white-space:nowrap;font-size:12.1px}
.tab svg{width:8px;height:8px}
.tab.plus{width:33px;height:17px;padding:0;justify-content:center;background:linear-gradient(#403f3e,#373635)}
.viewbar{height:21px;display:flex;align-items:center;padding:2px 0 0 8px;gap:12px}
.viewbar>svg{width:14px;height:14px;flex:none}
.viewbar>span{width:16px;margin:0 3px 0 3px}
.viewbar>span.vbtns{display:flex;gap:9px;width:auto;margin:0 8px 0 auto}
.vbtns svg{width:17px;height:16px;border:1px solid #242424;border-radius:3px;background:#363534}
.view{height:952px;border:3px solid #0505a8;border-right-color:#0000e0;display:grid;justify-content:start;padding:216px 0 0 70px}
.mapwrap{position:relative;width:1023px;height:512px}
#map{display:block;width:1023px;height:512px}
.cursor{position:absolute;left:509px;top:247px;width:12px;height:15px}
.right{flex:1;padding:0 1px 0 11px;font-size:12.5px}
.cme{padding:7px 8px 0 5px;width:357px;display:flex;flex-direction:column}
.c-search{gap:3.500px;height:25px;align-items:center;width:343.500px}
.c-search .field{flex:1}
.chk{height:16px;align-items:center;white-space:nowrap}.k1{margin-top:9px}
.h-map{margin-top:9px}
.right h4{font-size:12.5px}
.mapping{display:flex;margin-top:5px;height:182px;gap:.5px}
.chart{width:318px;height:182px}
.side{display:flex;flex-direction:column;justify-content:space-between}
.rc{position:relative}.rc svg{opacity:.85;margin-top:-4px}.rc b{position:absolute;left:12px;top:5px;color:#000;font-size:12px;font-weight:900}
.c-data{height:20px;margin-top:6px;align-items:center}.c-data label{width:40px}.c-data .field{flex:1}
.k2{margin-top:7px}.k3{margin-top:5px}
.cap{margin-top:7px;height:16px}
.table{margin-top:5px;height:190px;border:2px solid #292929;background:linear-gradient(90deg,#303030 15px,#1f1f1f 15px);display:flex;flex-direction:column}
.t2{height:192px;margin-top:4px}
.tr{display:grid;height:30px;line-height:28px;flex:none}
.t4 .tr{grid-template-columns:15px repeat(4,1fr)}.t2 .tr{grid-template-columns:15px repeat(2,1fr)}
.tr span{padding-left:3px;border-right:1px solid #292929;border-bottom:1px solid #292929}
.tr span:first-child,.tr.th span{background:linear-gradient(#484745,#3a3938);border:1px solid #1c1c1c;text-align:center;padding:0}
.tr.th{height:22px;line-height:19px}
.alt{background:#232323}
.cap2{margin-top:7px}
.h-par{margin-top:7px}
.k4{margin-top:6px}
.c-space{margin-top:6px;height:21px}.c-space label{width:79px;white-space:nowrap;margin-top:-2px}.c-space .combo{flex:1}
.c-nan{height:25px;margin-top:3px}.c-nan label{width:79px;margin-top:-1px}
.nan{width:37px;border:1px solid #1d1d1d;box-shadow:inset 0 0 0 1px #383838;padding:4px 5px;border-radius:2px}
.nan i{display:block;width:15px;height:15px;border-radius:50%;background:#450000;border:1px solid #220}
.nandrop{width:12px;margin-left:1px;border:1px solid #1d1d1d;border-radius:2px;background:conic-gradient(from -45deg at 50% 100%,#fff 90deg,transparent 0) 50% 40%/9px 5px no-repeat}
.c-foot{margin-top:9px;gap:3px}.c-foot .btn{flex:none;width:233px}.c-foot .upd{width:76px;box-shadow:0 0 0 1px #1b1b1b;gap:5px}.c-foot .btn:last-child{width:29px}
.status{height:28px;border-top:1px solid #1f1f1f;display:flex;align-items:center;padding-right:5px}
.sx{width:22px;height:20px;margin-left:961px;border:1px solid #262626;background:#363534;display:grid;place-items:center}.sx svg{width:9px;height:9px}
.sf{flex:1;height:23px;background:#1c1c1c;margin-left:2px;border-radius:2px;border-top:1px solid #3a3a3a}
```
FILE: map.js
```js
// Elevation field drawn as grey levels, then coloured with the diverging map.
const W = 1023, H = 512, K = 1 / 2.904;
const mk = () => { const c = document.createElement('canvas'); c.width = W; c.height = H; return c; };
const grey = t => { const v = Math.round(t * 255); return `rgb(${v},${v},${v})`; };
const pts = (s, side) => s.trim().split(/\s+/).map(p => { const [x, y] = p.split(',').map(Number); return [(x + (side === 'B' ? 1469 : -41)) * K, (y - 46) * K]; });
let seed = 7;
const rnd = () => (seed = (seed * 16807) % 2147483647) / 2147483647;

const areas = [
 ['A',.485,30,'41,46 990,46 960,560 1500,900 1500,1532 41,1532'],
 ['A',.53,26,'480,900 900,860 1560,930 1700,1300 1000,1400 700,1532 480,1500'],
 ['A',.575,6,'250,46 440,46 400,90 260,120 250,180 210,380 150,270 41,240 41,215 120,160 210,120'],
 ['A',.68,3,'41,225 100,200 135,245 80,230'], ['A',.68,3,'60,270 100,265 100,288 60,285'],
 ['A',.57,6,'105,340 160,380 150,500 130,450'],
 ['A',.6,6,'960,46 2650,46 2700,300 2400,560 1950,640 1700,680 1650,820 1600,900 1540,800 1450,790 1390,730 1310,620 1250,540 1280,680 1190,710 1150,690 1100,610 1050,640 980,570 960,430 1000,400 925,340 915,170 990,220'],
 ['A',.555,22,'1420,46 1900,46 1830,200 1850,330 1700,400 1500,200'],
 ['A',.66,9,'990,46 1190,46 1170,250 1290,420 1210,560 1195,700 1150,680 1090,500 1060,400 1000,260'],
 ['A',.71,3,'925,180 1000,250 1050,340 1075,470 1100,550 1060,630 980,550 960,440 1000,400 935,330'],
 ['A',.77,4,'1000,250 1050,310 1070,440 1060,380 1010,310'],
 ['A',.73,10,'1000,240 1150,260 1190,350 1120,440 1195,455 1195,600 1175,700 1110,530 1065,400'],
 ['A',.68,7,'1380,70 1440,50 1420,110 1390,100'],
 ['A',.64,2,'995,235 1060,330 1080,440 1110,520 1105,560 1090,520 1065,400 1043,330 990,250'],
 ['A',.62,5,'1010,46 1180,46 1150,200 1090,240 1010,190'],
 ['A',.64,4,'400,600 460,570 500,600 520,500 490,440 550,490 590,580 620,460 650,530 690,570 660,500 700,420 610,410 630,365 680,330 680,250 735,240 745,310 780,360 740,390 730,500 780,540 760,640 740,700 690,740 740,770 640,850 500,860 440,840 400,800 410,700 340,730 340,700 380,680 360,630'],
 ['A',.71,3,'335,700 380,690 370,730 340,735'],
 ['A',.67,16,'570,600 720,560 700,740 600,760'],
 ['A',.72,3,'870,460 900,450 930,475 900,490 915,530 890,500'],
 ['A',.57,18,'440,890 700,800 860,770 880,960 850,1200 560,1350 500,1150 420,1120'],
 ['A',.67,11,'410,1030 450,910 520,940 560,1060 490,1110 430,1140'],
 ['A',.71,6,'605,1010 690,980 690,1035 610,1030'], ['A',.72,4,'680,840 710,820 710,860 690,870'],['A',.68,4,'725,1080 745,1080 740,1095'],
 ['A',.59,5,'410,1240 480,1180 500,1190 460,1240 420,1270'],
 ['A',.65,8,'890,980 940,910 1000,880 1000,760 1050,770 1060,870 1110,910 1100,1050 1120,1130 1000,1250 960,1300 900,1240 868,1150'],
 ['A',.81,6,'910,950 1000,915 1020,870 1040,920 1000,965'], ['A',.88,4,'1035,1020 1090,990 1080,1020 1045,1030'], ['A',.76,6,'1005,820 1030,780 1050,850 1010,850'],['A',.74,7,'1020,1080 1050,1080 1040,1110'],
 ['A',.59,8,'1150,790 1180,840 1240,810 1290,900 1310,980 1400,900 1460,960 1560,990 1600,1120 1500,1200 1250,1250 1100,1280 1000,1400 960,1290 1100,1000 1160,950'],
 ['A',.42,4,'900,1240 955,1300 940,1400 890,1532 730,1532 780,1400 850,1290'],
 ['A',.46,26,'1100,1440 1400,1300 1800,1420 1700,1532 920,1532'],
 ['A',.36,14,'41,250 90,300 125,420 165,570 240,660 300,800 340,1000 380,1180 480,1170 380,1400 300,1380 230,1480 150,1400 60,1280 80,1180 41,1100'],
 ['A',.22,16,'41,560 110,540 200,640 250,720 310,830 330,960 375,1110 375,1230 300,1240 190,1170 100,1140 41,1080'],
 ['A',.13,12,'41,600 100,580 185,650 240,720 300,830 310,950 340,1060 280,1070 190,1020 90,1020 41,960'],
 ['A',.03,9,'41,690 80,600 150,640 195,650 160,740 150,820 160,900 190,970 150,980 100,850 41,760'],
 ['A',.22,1,'41,650 110,730 100,745 41,680'],
 ['A',.2,12,'41,20 250,30 230,100 120,140 60,200 30,200'],
 ['A',.13,12,'20,1380 120,1385 190,1450 215,1570 10,1570'],
 ['A',.52,4,'41,1270 55,1130 75,1115 75,1280 160,1390 210,1440 120,1370 60,1370 41,1380'],
 ['A',.8,3,'41,1240 62,1210 65,1300 100,1358 41,1340'],
 ['A',.74,5,'225,1460 280,1460 310,1410 330,1480 370,1490 370,1540 250,1540'], ['A',.7,4,'410,1540 430,1480 440,1530'],['A',.66,4,'520,1500 570,1500 580,1540 530,1540'],
 ['B',.57,22,'150,480 400,440 560,540 900,820 1000,730 1170,740 1440,700 1380,850 1300,980 1180,1230 1000,1050 940,960 760,1100 740,1400 700,1532 400,1500 200,1380 150,1150 40,1000 100,760'],
 ['B',.62,14,'340,330 600,46 1180,46 1260,240 1250,300 1130,345 1090,420 1040,500 980,640 760,700 400,700 310,730 290,600'],
 ['B',.66,14,'510,200 700,100 1180,46 1250,240 1130,345 1080,420 980,560 520,700 420,600 520,450'],
 ['B',.7,10,'800,46 1110,46 1190,90 1215,185 1262,235 1250,300 1140,345 980,300 880,420 640,540 560,470 720,270 830,230'],
 ['B',.77,10,'690,490 820,290 930,250 1100,290 1240,280 1140,345 1010,300 900,320 840,410 990,490 980,520 860,460 760,500'],
 ['B',.655,3,'860,400 905,320 1010,308 1130,345 1080,440 1000,490 930,470'],
 ['B',.68,6,'940,470 1040,460 1010,560 1000,700 980,560'],
 ['B',.6,8,'190,850 260,740 300,780 400,800 380,900 340,960 200,960 150,930'],
 ['B',.74,4,'290,820 390,810 400,900 370,950 330,870'],
 ['B',.68,10,'190,1080 370,960 500,800 780,880 780,1200 740,1340 720,1450 720,1540 490,1540 400,1400 300,1300 220,1180'],
 ['B',.8,8,'370,1000 400,880 540,850 760,900 700,1150 650,1330 690,1540 500,1540 440,1400 350,1250 340,1060'],
 ['B',.87,7,'400,880 535,850 495,710 620,690 700,690 790,760 750,650 820,580 890,610 870,730 800,790 880,860 750,920 700,1090 700,1180 640,1300 640,1400 540,1420 420,1370 410,1250 440,1140 380,1060'],
 ['B',.905,8,'560,780 640,700 760,770 800,850 740,930 690,1000 690,1180 620,1370 560,1330 440,1380 430,1270 450,1140 510,1100 560,960'],
 ['B',.945,10,'590,940 650,840 760,840 740,920 700,1000 640,1100 610,1250 575,1200 570,1050'],
 ['B',1,6,'660,870 755,865 730,920 710,970 690,960 680,920 640,940 615,1050 605,1030 620,920'],
 ['B',.72,6,'350,1030 300,1040 190,1090 220,1180 350,1300 360,1100'],
 ['B',.53,9,'790,900 880,900 950,1100 1050,1200 1170,1290 1180,1370 1230,1540 1120,1540 960,1380 860,1460 780,1460 720,1540 710,1500 760,1280 780,1100 770,1000'],
 ['B',.46,22,'820,1150 900,1200 1040,1280 1170,1370 1180,1480 960,1380 780,1400'],
 ['B',.37,9,'1000,1400 1050,1340 1100,1350 1180,1370 1225,1450 1235,1550 1120,1550 1040,1460'],
 ['B',.73,3,'725,1540 760,1470 860,1460 900,1420 960,1385 1000,1410 1030,1470 1070,1475 1100,1540'],
 ['B',.5,22,'1150,380 1300,330 1520,300 1520,640 1400,740 1200,740 1090,600'],
 ['B',.5,8,'1190,20 1480,20 1350,300 1160,365 1260,300 1262,230 1215,185 1195,90'],
 ['B',.41,22,'1530,20 1450,30 1350,150 1250,330 1400,350 1450,650 1530,600'],
 ['B',.55,12,'1440,700 1530,640 1530,900 1300,980 1340,880'],
 ['B',.645,8,'1350,870 1310,960 1250,1130 1170,1250 1190,1350 1220,1540 1450,1480 1520,1300 1520,1020 1440,1060 1400,950'],
 ['B',.58,3,'1430,740 1350,870 1310,960 1290,1010 1300,960 1340,870'],
 ['B',.69,16,'1290,1010 1340,1020 1300,1200 1190,1220 1240,1140'],
 ['B',.53,14,'1230,1540 1250,1480 1520,1440 1520,1540'],
 ['B',.69,5,'1075,1040 1100,1010 1100,1030 1080,1045'],['B',.8,3,'665,198 685,195 680,208'],['B',.74,3,'1015,505 1040,500 1030,512']
];
// side, core level, core width, valley width, side-branch length, course (trunks first, then tapering tributaries)
const TRUNKS = 8;
const rivers = [
 ['A',.03,15,44,62,'190,660 215,600 240,565 275,548 325,535 345,490 352,450 375,432 415,390 420,350 415,320 460,300 485,260 490,235 515,240 530,270 570,230 600,185 630,160 690,150 740,132 790,148 815,180 833,210 838,250 855,290 850,320 835,350 838,390 850,430 825,470 815,520 830,560 855,600'],
 ['A',.06,9,44,56,'855,600 900,598 950,585 975,610 985,640 990,665 1020,690 1060,690 1100,720 1150,745 1170,770'],
 ['A',.08,7,34,50,'1170,770 1200,780 1250,775 1285,800 1330,803 1350,830 1390,825 1430,840 1440,860 1470,865 1480,885 1505,885 1515,920 1540,930 1560,915'],
 ['B',.1,9,36,58,'45,915 75,935 85,965 105,982 180,985 240,970 285,945 295,905 285,880 250,860 240,840 210,815 212,785 240,775 280,770 288,715 315,715 325,762 370,775 410,770'],
 ['B',.12,9,38,74,'410,770 430,720 445,690 455,655 520,625 530,590 560,575 610,582 650,575 700,575 745,550 790,505 850,495 890,500 930,545 965,590 980,610 985,650 1000,700'],
 ['B',.13,9,28,44,'1000,700 985,740 970,780 935,850 940,880 920,920'],
 ['B',.14,9,18,20,'920,920 905,940 930,950 960,962 925,975 915,990 940,1020 968,1040 960,1080 945,1110 980,1160 1000,1205 1045,1250 1050,1305 1075,1340 1105,1370 1115,1410 1160,1460 1180,1500 1190,1532'],
 ['B',.24,8,16,10,'1000,700 1015,693 1030,700 1045,715 1060,705 1060,695 1085,698 1100,692 1100,610 1125,590 1120,565 1140,550 1160,540 1145,525 1130,510 1140,480 1130,450 1130,420 1115,400 1145,380 1150,365 1180,365 1200,352 1230,340 1265,345 1300,330 1350,315 1390,290'],
 ['A',.12,11,30,50,'490,240 470,200 490,150 515,115 530,80 500,60 480,46'],
 ['A',.15,10,26,40,'470,210 440,190 400,185 370,155 340,120'],
 ['A',.12,12,30,40,'800,145 780,110 760,75 740,46'], ['A',.22,9,28,42,'800,140 830,115 860,100 880,50'],['A',.28,7,22,30,'860,100 900,90 940,110'],
 ['A',.08,13,26,34,'410,315 370,305 330,270'], ['A',.1,11,24,32,'470,290 430,265 370,265'],
 ['A',.08,13,26,40,'370,430 330,400 295,375'], ['A',.12,10,24,40,'380,440 430,470 470,485 500,520'],
 ['A',.12,10,26,42,'490,280 505,330 530,370 550,420 590,440 660,450'], ['A',.1,10,26,42,'570,230 600,280 640,320 660,345'],
 ['A',.16,8,16,28,'350,500 400,505 415,545'], ['A',.12,9,20,28,'340,530 365,570 380,590'],['A',.28,6,16,30,'190,690 250,690 310,690'],
 ['A',.22,8,34,50,'850,430 800,425 730,400'], ['A',.22,7,26,44,'820,490 780,490 740,490'],['A',.2,8,26,44,'835,240 800,240 770,220'],['A',.22,7,26,44,'855,290 880,330 890,380'],
 ['A',.2,8,54,60,'855,600 825,630 815,660 780,700 730,780'], ['A',.26,8,54,50,'820,660 880,690 890,730 860,800 850,840 770,890'],
 ['A',.31,9,54,50,'940,640 955,700 950,780 930,860'],['A',.3,8,44,60,'790,690 740,710 700,730'],
 ['A',.22,7,34,44,'1240,770 1225,710 1205,640 1190,590 1170,530'], ['A',.22,7,34,50,'1340,800 1340,750 1310,690 1280,620 1250,530'],
 ['A',.26,6,30,46,'1340,830 1340,880 1320,940 1320,980'], ['A',.32,6,26,40,'1480,860 1490,820 1470,770 1470,710'],
 ['A',.32,7,34,44,'1560,760 1530,740 1510,690 1500,620'], ['A',.38,5,16,24,'530,80 600,70 660,90'],
 ['A',.38,12,36,24,'1140,730 1120,640 1090,560'],['A',.41,16,50,34,'1110,740 1140,880 1150,1030'],
 ['A',.25,5,16,30,'250,780 320,790 345,800'],['A',.25,5,16,28,'300,840 340,880'],
 ['A',.27,4,10,8,'170,970 220,1060 215,1180 220,1240 200,1310'],['A',.26,4,10,8,'190,980 250,1060 300,1130 370,1190 375,1300'],
 ['B',.28,9,38,56,'0,860 10,800 30,750 80,680 120,620 125,530 190,500 212,480'], ['B',.38,5,12,8,'212,480 205,430 225,365 275,335 290,310'],
 ['B',.23,10,36,56,'100,985 95,1040 108,1100 80,1160 80,1200'],
 ['B',.33,10,28,28,'80,1195 110,1240 125,1290 110,1330 105,1380 125,1440 130,1532'],
 ['B',.33,10,24,26,'80,1195 20,1210 -30,1210 -80,1230 -110,1260'],['B',.4,6,14,16,'80,1220 40,1280 0,1330'],
 ['B',.41,6,14,14,'120,1325 150,1350 180,1400 250,1415'], ['B',.36,9,36,50,'110,1110 150,1140 190,1180 260,1180'],
 ['B',.38,4,10,12,'1100,692 1140,670 1165,670 1175,625 1210,615'],['B',.4,3,8,12,'1150,670 1200,710'],
 ['B',.38,4,10,12,'950,1110 910,1100 885,1080'],['B',.4,4,10,10,'1075,1330 1030,1310 1000,1310'],['B',.38,4,10,10,'1105,1370 1130,1330'],
 ['B',.23,7,30,44,'60,940 60,890 80,860 110,830'], ['B',.2,7,26,40,'285,945 310,970 360,955'],
 ['B',.22,7,26,46,'690,580 710,620 740,650 770,740'], ['B',.28,6,24,46,'560,620 590,680 630,770'],['B',.26,7,28,46,'400,770 440,790 520,830'],['B',.28,7,26,42,'400,770 400,820 395,880'],
 ['B',.26,7,34,50,'935,850 880,800 810,790'],['B',.28,6,34,42,'970,600 930,640 880,640'],['B',.3,6,30,42,'860,500 830,450 810,425'],
 ['B',.28,6,30,40,'545,590 560,550 535,525'],['B',.3,6,26,38,'445,690 420,650 400,610'],['B',.32,6,26,38,'790,505 760,480 725,470'],
 ['B',.33,6,24,36,'940,640 930,720 870,730'],
 ['B',.7,3,4,8,'540,1100 440,1150 415,1250 420,1380 500,1375'],['B',.56,5,8,8,'420,1380 350,1400 240,1410'],['B',.6,4,8,14,'780,1215 740,1215'],['B',.58,4,8,10,'170,1180 320,1140']
];

// fractal value noise
const N = 256, lat = new Float32Array(N * N).map(() => rnd() * 2 - 1);
function vn(x, y) {
  const xi = Math.floor(x), yi = Math.floor(y); let fx = x - xi, fy = y - yi;
  fx *= fx * (3 - 2 * fx); fy *= fy * (3 - 2 * fy);
  const g = (a, b) => lat[((b & 255) << 8) + (a & 255)];
  const p = g(xi, yi), q = g(xi + 1, yi), r = g(xi, yi + 1), s = g(xi + 1, yi + 1);
  return p + (q - p) * fx + (r - p) * fy + (p - q - r + s) * fx * fy;
}
const fbm = (x, y) => vn(x, y) * .5 + vn(x * 2.1 + 9, y * 2.1) * .28 + vn(x * 4.3, y * 4.3 + 5) * .18 + vn(x * 8.7, y * 8.7) * .1;

const base = mk(), b = base.getContext('2d');
b.fillStyle = grey(.53); b.fillRect(0, 0, W, H);
for (const [side, lv, blur, s] of areas) {
  b.filter = `blur(${blur * .8}px)`; b.fillStyle = grey(lv); b.beginPath();
  pts(s, side).forEach((p, i) => i ? b.lineTo(...p) : b.moveTo(...p)); b.closePath(); b.fill();
}
b.filter = 'none';
const src = b.getImageData(0, 0, W, H).data, field = new Float32Array(W * H);
for (let y = 0; y < H; y++) for (let x = 0; x < W; x++) {
  const u = fbm(x / 13, y / 13), v = fbm(x / 13 + 40, y / 13 + 80);
  const sx = Math.max(0, Math.min(W - 1, Math.round(x + u * 9))), sy = Math.max(0, Math.min(H - 1, Math.round(y + v * 9)));
  field[y * W + x] = src[(sy * W + sx) * 4] / 255 + fbm(x / 34 + 7, y / 34) * .012;
}

// valleys: channel course plus recursive side gullies
const segs = [];
function gully(x, y, a, len, w, lv, depth) {
  const n = Math.max(2, Math.round(len / 2.5)), end = Math.max(.42, lv); let px = x, py = y;
  for (let i = 0; i < n; i++) {
    a += (rnd() - .5) * .5;
    const qx = px + Math.cos(a) * len / n, qy = py + Math.sin(a) * len / n, t = i / n;
    segs.push([px, py, qx, qy, w * (1 - t * .75), lv + (end - lv) * t, 1 - t]);
    if (depth < 3 && rnd() < .4 && len > 5) gully(qx, qy, a + (rnd() < .5 ? 1 : -1) * (.5 + rnd() * .5), len * (.3 + rnd() * .3), w * .65, lv + .05, depth + 1);
    px = qx; py = qy;
  }
}
rivers.forEach(([side, lv, cw, vw, bl, s], idx) => {
  const P = pts(s, side), total = P.length - 1;
  for (let i = 1; i < P.length; i++) {
    const [x0, y0] = P[i - 1], [x1, y1] = P[i], d = Math.hypot(x1 - x0, y1 - y0), n = Math.max(1, Math.round(d / 4)), a = Math.atan2(y1 - y0, x1 - x0);
    let px = x0, py = y0;
    for (let k = 1; k <= n; k++) {
      const prog = (i - 1 + k / n) / total, f = idx < TRUNKS ? 1 : 1 - .75 * prog;
      const j = k === n ? 0 : (rnd() - .5) * 2, qx = x0 + (x1 - x0) * k / n - Math.sin(a) * j, qy = y0 + (y1 - y0) * k / n + Math.cos(a) * j;
      segs.push([px, py, qx, qy, cw * K * (.35 + .65 * f), lv + (1 - f) * .12, 1, vw * K * f * (.7 + rnd() * .5)]);
      for (const sgn of [-1, 1]) if (rnd() < .75) gully(qx, qy, a + sgn * (.8 + rnd() * .6), bl * K * (.3 + rnd() * .8) * (.35 + .65 * f), cw * K * .5 * (.4 + .6 * f), lv + .1 + (bl > 70 ? .06 : 0) + (1 - f) * .1, 1);
      px = qx; py = qy;
    }
  }
});
const layer = (fn, blur) => {
  const c = mk(), g = c.getContext('2d'); g.fillStyle = '#fff'; g.fillRect(0, 0, W, H);
  g.globalCompositeOperation = 'darken'; g.lineCap = 'round';
  for (const q of segs) { const r = fn(q); if (!r) continue; g.strokeStyle = grey(Math.min(1, r[1])); g.lineWidth = r[0]; g.beginPath(); g.moveTo(q[0], q[1]); g.lineTo(q[2], q[3]); g.stroke(); }
  const o = mk(), h = o.getContext('2d'); h.fillStyle = '#fff'; h.fillRect(0, 0, W, H); h.filter = `blur(${blur}px)`; h.drawImage(c, 0, 0);
  return h.getImageData(0, 0, W, H).data;
};
const L = [
  layer(q => q[7] ? [q[7] + 2, Math.max(q[5], .455)] : [q[4] + 1.5 + 4 * q[6], Math.max(q[5], .475)], 1.3),
  layer(q => q[7] ? [q[7] * .55, Math.max(q[5], .38)] : [q[4] + .8 + 1.6 * q[6], Math.max(q[5], .4)], 1.2),
  layer(q => q[7] ? [q[4] * 1.800, Math.max(.17, q[5] + .08)] : [q[4] + .8, q[5] + .03], .7),
  layer(q => q[7] ? [q[4] * .8, q[5]] : null, .5)
];
for (let i = 0; i < W * H; i++) for (const d of L) {
  const t = d[i * 4] / 255; if (t < field[i]) field[i] = t;
}

const ramp = [[59,76,192],[98,130,234],[141,176,254],[184,208,249],[221,221,221],[245,196,173],[244,154,123],[222,96,77],[180,4,38]];
const ctx = document.getElementById('map').getContext('2d'), out = ctx.createImageData(W, H);
for (let i = 0; i < W * H; i++) {
  const t = Math.max(0, Math.min(.9999, field[i])) * 8, k = Math.floor(t), f = t - k;
  for (let c = 0; c < 3; c++) out.data[i * 4 + c] = ramp[k][c] + (ramp[k + 1][c] - ramp[k][c]) * f;
  out.data[i * 4 + 3] = 255;
}
ctx.putImageData(out, 0, 0);
```
